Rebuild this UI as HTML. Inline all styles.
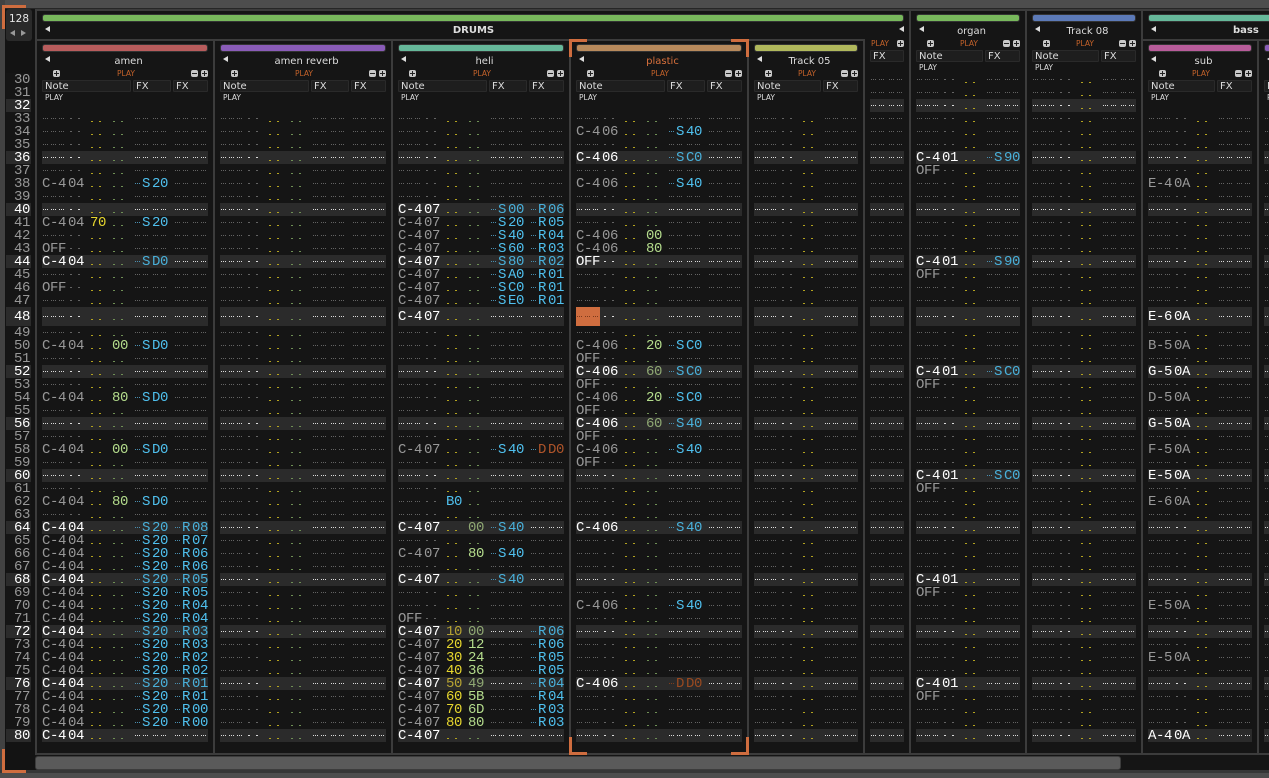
<!DOCTYPE html>
<html><head><meta charset="utf-8"><title>Pattern Editor</title>
<style>
:root{
--d:linear-gradient(90deg,#dcdcdc 1px,#0000 1px 2px,#dcdcdc 2px 3px,#0000 3px 4px,#dcdcdc 4px 5px,#0000 5px);
--l:linear-gradient(#dcdcdc,#dcdcdc);
--q:linear-gradient(90deg,#4a8fb0 1px,#0000 1px 2px,#4a8fb0 2px 3px,#0000 3px 4px,#4a8fb0 4px 5px,#0000 5px);
--z:linear-gradient(90deg,#7d3d1c 1px,#0000 1px 2px,#7d3d1c 2px 3px,#0000 3px 4px,#7d3d1c 4px 5px,#0000 5px);
--k:linear-gradient(90deg,#7b3a1c 1px,#0000 1px 2px,#7b3a1c 2px 3px,#0000 3px 4px,#7b3a1c 4px 5px,#0000 5px);
--y:linear-gradient(#b3a31f,#b3a31f);
--g:linear-gradient(#6f8f55,#6f8f55);
}
html,body{margin:0;padding:0;width:1269px;height:778px;overflow:hidden;background:#151515;font-family:"DejaVu Sans",sans-serif;position:relative}
#w{position:absolute;left:0;top:0;width:1269px;height:778px;overflow:hidden}
.t{position:absolute;top:0;height:778px;font:14px/14px "Liberation Mono",monospace;letter-spacing:-.4px}
.w1{width:166px}.w2{width:104px}.w3{width:34px}
.t i{position:absolute;left:0;right:0;display:block}
.s1{top:73px;height:234px;background:repeating-linear-gradient(#0000 0 26px,#2b2b2b 26px 39px,#0000 39px 52px)}
.s2{top:326px;height:416px;background:repeating-linear-gradient(#0000 0 39px,#2b2b2b 39px 52px)}
.s3{top:307px;height:19px;background:#2b2b2b}
.t i::before,.t i::after{content:"";position:absolute;left:0;right:0;top:0;bottom:0}
.s1::before{-webkit-mask-image:repeating-linear-gradient(#0000 0 6px,rgba(0,0,0,.4) 6px 7px,#0000 7px 19px,rgba(0,0,0,.4) 19px 20px,#0000 20px 32px,#000 32px 33px,#0000 33px 45px,rgba(0,0,0,.4) 45px 46px,#0000 46px 52px);mask-image:repeating-linear-gradient(#0000 0 6px,rgba(0,0,0,.4) 6px 7px,#0000 7px 19px,rgba(0,0,0,.4) 19px 20px,#0000 20px 32px,#000 32px 33px,#0000 33px 45px,rgba(0,0,0,.4) 45px 46px,#0000 46px 52px)}
.s2::before{-webkit-mask-image:repeating-linear-gradient(#0000 0 6px,rgba(0,0,0,.4) 6px 7px,#0000 7px 19px,rgba(0,0,0,.4) 19px 20px,#0000 20px 32px,rgba(0,0,0,.4) 32px 33px,#0000 33px 45px,#000 45px 46px,#0000 46px 52px);mask-image:repeating-linear-gradient(#0000 0 6px,rgba(0,0,0,.4) 6px 7px,#0000 7px 19px,rgba(0,0,0,.4) 19px 20px,#0000 20px 32px,rgba(0,0,0,.4) 32px 33px,#0000 33px 45px,#000 45px 46px,#0000 46px 52px)}
.s3::before{-webkit-mask-image:linear-gradient(#0000 0 9px,#000 9px 10px,#0000 10px);mask-image:linear-gradient(#0000 0 9px,#000 9px 10px,#0000 10px)}
.s1::after,.s2::after{-webkit-mask-image:repeating-linear-gradient(#0000 0 9px,#000 9px 10px,#0000 10px 13px);mask-image:repeating-linear-gradient(#0000 0 9px,#000 9px 10px,#0000 10px 13px)}
.s3::after{-webkit-mask-image:linear-gradient(#0000 0 12px,#000 12px 13px,#0000 13px);mask-image:linear-gradient(#0000 0 12px,#000 12px 13px,#0000 13px)}
.w1 i::before{background:var(--d) 1px 0/6px 100% no-repeat,var(--d) 9px 0/6px 100% no-repeat,var(--d) 17px 0/6px 100% no-repeat,var(--l) 28px 0/2px 100% no-repeat,var(--l) 36px 0/2px 100% no-repeat,var(--d) 93px 0/6px 100% no-repeat,var(--d) 101px 0/6px 100% no-repeat,var(--d) 111px 0/6px 100% no-repeat,var(--d) 119px 0/6px 100% no-repeat,var(--d) 133px 0/6px 100% no-repeat,var(--d) 141px 0/6px 100% no-repeat,var(--d) 151px 0/6px 100% no-repeat,var(--d) 159px 0/6px 100% no-repeat}
.w1 i::after{background:var(--y) 49px 0/2px 100% no-repeat,var(--y) 57px 0/2px 100% no-repeat,var(--g) 71px 0/2px 100% no-repeat,var(--g) 79px 0/2px 100% no-repeat}
.w2 i::before{background:var(--d) 1px 0/6px 100% no-repeat,var(--d) 9px 0/6px 100% no-repeat,var(--d) 17px 0/6px 100% no-repeat,var(--l) 28px 0/2px 100% no-repeat,var(--l) 36px 0/2px 100% no-repeat,var(--d) 71px 0/6px 100% no-repeat,var(--d) 79px 0/6px 100% no-repeat,var(--d) 89px 0/6px 100% no-repeat,var(--d) 97px 0/6px 100% no-repeat}
.w2 i::after{background:var(--y) 49px 0/2px 100% no-repeat,var(--y) 57px 0/2px 100% no-repeat}
.w3 i::before{background:var(--d) 1px 0/6px 100% no-repeat,var(--d) 9px 0/6px 100% no-repeat,var(--d) 19px 0/6px 100% no-repeat,var(--d) 27px 0/6px 100% no-repeat}
p{position:absolute;left:0;margin:0;color:#989898}
p b{position:absolute;left:0;top:0;width:26px;height:13px;font-weight:normal;background:#151515;white-space:nowrap;overflow:hidden}
p.b{color:#fff}
p.b b{background:#2b2b2b}
p.h b{height:19px;line-height:20px}
b.i{left:26px;width:20px}
b.v{left:48px;width:20px;color:#e6d62e}
b.m{left:70px;width:20px;color:#b4dc8c}
b.f{left:92px;width:32px;padding-left:8px;color:#4fc0ee}
b.g{left:132px;width:26px;padding-left:8px;color:#4fc0ee}
.w2 b.f{left:70px;width:26px}
p.b b.v{color:#b7a332}
p.b b.m{color:#8fa873}
p.b b.f,p.b b.g{color:#49b0da}
b.f::before,b.g::before{content:"";position:absolute;left:1px;top:6px;width:6px;height:1px;background:var(--q)}
p.h b.f::before,p.h b.g::before{top:9px}
b.f.r,p.b b.f.r{color:#9a4a20}
b.f.r::before{background:var(--z)}
u{display:inline-block;width:10px;text-decoration:none}
p b.cur,p.b b.cur{width:24px;height:19px;background:var(--k) 1px 9px/6px 1px no-repeat,var(--k) 9px 9px/6px 1px no-repeat,var(--k) 17px 9px/6px 1px no-repeat,#cf6d3f}
.h0{position:absolute;left:0;right:0;background:#151515;box-shadow:-6px 0 #151515,6px 0 #151515;font-family:"DejaVu Sans",sans-serif;letter-spacing:0;color:#ddd}
.n1{top:41px;height:71px}.n0{top:11px;height:62px}
.bar{position:absolute;left:0;right:0;top:3px;height:8px;border:1px solid #333;border-radius:3px;box-sizing:border-box}
.tri{position:absolute;left:3px;top:15px;width:0;height:0;border-top:3.5px solid transparent;border-bottom:3.5px solid transparent;border-right:5px solid #ddd}
.nm{position:absolute;left:7px;right:0;top:14px;text-align:center;font-size:10px;line-height:14px;color:#ddd;white-space:nowrap}
.pl,.pw{position:absolute;font-size:7.5px;line-height:8px;white-space:nowrap}
.pl{top:29px;color:#c4622a;text-align:center;width:40px}
.pw{top:53px;left:3px;color:#ddd}
.bt{position:absolute;top:29px;width:7px;height:7px;border-radius:2px;background:linear-gradient(#222,#222) center/5px 1px no-repeat,linear-gradient(#222,#222) center/1px 5px no-repeat,#c8c8c8}
.bt.x{background:linear-gradient(#222,#222) center/5px 1px no-repeat,#c8c8c8}
.bx{position:absolute;top:39px;height:12px;box-sizing:border-box;background:#1e1e1e;border:1px solid #2a2a2a;border-radius:1px;font-size:10px;line-height:11px;color:#ddd;padding-left:2px;overflow:hidden}
.L{position:absolute;background:#3c3c3c;width:2px;z-index:5}
.H{position:absolute;background:#3c3c3c;height:2px;z-index:5}
.o{position:absolute;background:#cf6d3f;z-index:8}
#rn{position:absolute;left:6px;top:73px;width:24px;font:14px/14px "Liberation Mono",monospace;letter-spacing:-.4px;color:#989898;text-align:right}
#rn div{height:13px;background:#151515;padding-right:1px;margin-right:-1px}
#rn .b{background:#2b2b2b;color:#fff}
#rn .h{height:19px;line-height:20px}
</style></head><body><div id="w">

<!-- top strip and left column -->
<div style="position:absolute;left:0;top:0;width:1269px;height:8px;background:#4d4d4d"></div>
<div style="position:absolute;left:0;top:8px;width:1269px;height:1px;background:#262626"></div>
<div style="position:absolute;left:0;top:0;width:5px;height:778px;background:#424242"></div>
<div style="position:absolute;left:5px;top:9px;width:30px;height:762px;background:#131313"></div>
<div style="position:absolute;left:6px;top:9px;width:26px;height:32px;background:#2a2a2a;border-radius:3px"></div>
<div style="position:absolute;left:6px;top:13px;width:26px;text-align:center;font-size:10.5px;line-height:12px;color:#e6e6e6">128</div>
<div style="position:absolute;left:10px;top:30px;width:0;height:0;border-top:3.5px solid transparent;border-bottom:3.5px solid transparent;border-right:5px solid #9a9a9a"></div>
<div style="position:absolute;left:21px;top:30px;width:0;height:0;border-top:3.5px solid transparent;border-bottom:3.5px solid transparent;border-left:5px solid #9a9a9a"></div>

<div id="rn"><div>30</div><div>31</div><div class="b">32</div><div>33</div><div>34</div><div>35</div><div class="b">36</div><div>37</div><div>38</div><div>39</div><div class="b">40</div><div>41</div><div>42</div><div>43</div><div class="b">44</div><div>45</div><div>46</div><div>47</div><div class="b h">48</div><div>49</div><div>50</div><div>51</div><div class="b">52</div><div>53</div><div>54</div><div>55</div><div class="b">56</div><div>57</div><div>58</div><div>59</div><div class="b">60</div><div>61</div><div>62</div><div>63</div><div class="b">64</div><div>65</div><div>66</div><div>67</div><div class="b">68</div><div>69</div><div>70</div><div>71</div><div class="b">72</div><div>73</div><div>74</div><div>75</div><div class="b">76</div><div>77</div><div>78</div><div>79</div><div class="b">80</div></div>

<!-- amen -->
<div class="t w1" style="left:42px"><i class="s1"></i><i class="s3"></i><i class="s2"></i>
<p style="top:177px"><b>C-4</b><b class="i">04</b><b class="f"><u>S</u>20</b></p>
<p style="top:216px"><b>C-4</b><b class="i">04</b><b class="v">70</b><b class="f"><u>S</u>20</b></p>
<p style="top:242px"><b>OFF</b></p>
<p class="b" style="top:255px"><b>C-4</b><b class="i">04</b><b class="f"><u>S</u>D0</b></p>
<p style="top:281px"><b>OFF</b></p>
<p style="top:339px"><b>C-4</b><b class="i">04</b><b class="m">00</b><b class="f"><u>S</u>D0</b></p>
<p style="top:391px"><b>C-4</b><b class="i">04</b><b class="m">80</b><b class="f"><u>S</u>D0</b></p>
<p style="top:443px"><b>C-4</b><b class="i">04</b><b class="m">00</b><b class="f"><u>S</u>D0</b></p>
<p style="top:495px"><b>C-4</b><b class="i">04</b><b class="m">80</b><b class="f"><u>S</u>D0</b></p>
<p class="b" style="top:521px"><b>C-4</b><b class="i">04</b><b class="f"><u>S</u>20</b><b class="g"><u>R</u>08</b></p>
<p style="top:534px"><b>C-4</b><b class="i">04</b><b class="f"><u>S</u>20</b><b class="g"><u>R</u>07</b></p>
<p style="top:547px"><b>C-4</b><b class="i">04</b><b class="f"><u>S</u>20</b><b class="g"><u>R</u>06</b></p>
<p style="top:560px"><b>C-4</b><b class="i">04</b><b class="f"><u>S</u>20</b><b class="g"><u>R</u>06</b></p>
<p class="b" style="top:573px"><b>C-4</b><b class="i">04</b><b class="f"><u>S</u>20</b><b class="g"><u>R</u>05</b></p>
<p style="top:586px"><b>C-4</b><b class="i">04</b><b class="f"><u>S</u>20</b><b class="g"><u>R</u>05</b></p>
<p style="top:599px"><b>C-4</b><b class="i">04</b><b class="f"><u>S</u>20</b><b class="g"><u>R</u>04</b></p>
<p style="top:612px"><b>C-4</b><b class="i">04</b><b class="f"><u>S</u>20</b><b class="g"><u>R</u>04</b></p>
<p class="b" style="top:625px"><b>C-4</b><b class="i">04</b><b class="f"><u>S</u>20</b><b class="g"><u>R</u>03</b></p>
<p style="top:638px"><b>C-4</b><b class="i">04</b><b class="f"><u>S</u>20</b><b class="g"><u>R</u>03</b></p>
<p style="top:651px"><b>C-4</b><b class="i">04</b><b class="f"><u>S</u>20</b><b class="g"><u>R</u>02</b></p>
<p style="top:664px"><b>C-4</b><b class="i">04</b><b class="f"><u>S</u>20</b><b class="g"><u>R</u>02</b></p>
<p class="b" style="top:677px"><b>C-4</b><b class="i">04</b><b class="f"><u>S</u>20</b><b class="g"><u>R</u>01</b></p>
<p style="top:690px"><b>C-4</b><b class="i">04</b><b class="f"><u>S</u>20</b><b class="g"><u>R</u>01</b></p>
<p style="top:703px"><b>C-4</b><b class="i">04</b><b class="f"><u>S</u>20</b><b class="g"><u>R</u>00</b></p>
<p style="top:716px"><b>C-4</b><b class="i">04</b><b class="f"><u>S</u>20</b><b class="g"><u>R</u>00</b></p>
<p class="b" style="top:729px"><b>C-4</b><b class="i">04</b></p>
<div class="h0 n1"><div class="bar" style="background:#b85c5c"></div><div class="tri"></div><div class="nm">amen</div><div class="bt" style="left:11px"></div><div class="pl" style="left:64px">PLAY</div><div class="bt x" style="left:149px"></div><div class="bt" style="left:159px"></div><div class="bx" style="left:0;width:89px">Note</div><div class="bx" style="left:91px;width:38px">FX</div><div class="bx" style="left:131px;width:35px">FX</div><div class="pw">PLAY</div></div>
</div>

<!-- amen reverb -->
<div class="t w1" style="left:220px"><i class="s1"></i><i class="s3"></i><i class="s2"></i>
<div class="h0 n1"><div class="bar" style="background:#8a5cb8"></div><div class="tri"></div><div class="nm">amen reverb</div><div class="bt" style="left:11px"></div><div class="pl" style="left:64px">PLAY</div><div class="bt x" style="left:149px"></div><div class="bt" style="left:159px"></div><div class="bx" style="left:0;width:89px">Note</div><div class="bx" style="left:91px;width:38px">FX</div><div class="bx" style="left:131px;width:35px">FX</div><div class="pw">PLAY</div></div>
</div>

<!-- heli -->
<div class="t w1" style="left:398px"><i class="s1"></i><i class="s3"></i><i class="s2"></i>
<p class="b" style="top:203px"><b>C-4</b><b class="i">07</b><b class="f"><u>S</u>00</b><b class="g"><u>R</u>06</b></p>
<p style="top:216px"><b>C-4</b><b class="i">07</b><b class="f"><u>S</u>20</b><b class="g"><u>R</u>05</b></p>
<p style="top:229px"><b>C-4</b><b class="i">07</b><b class="f"><u>S</u>40</b><b class="g"><u>R</u>04</b></p>
<p style="top:242px"><b>C-4</b><b class="i">07</b><b class="f"><u>S</u>60</b><b class="g"><u>R</u>03</b></p>
<p class="b" style="top:255px"><b>C-4</b><b class="i">07</b><b class="f"><u>S</u>80</b><b class="g"><u>R</u>02</b></p>
<p style="top:268px"><b>C-4</b><b class="i">07</b><b class="f"><u>S</u>A0</b><b class="g"><u>R</u>01</b></p>
<p style="top:281px"><b>C-4</b><b class="i">07</b><b class="f"><u>S</u>C0</b><b class="g"><u>R</u>01</b></p>
<p style="top:294px"><b>C-4</b><b class="i">07</b><b class="f"><u>S</u>E0</b><b class="g"><u>R</u>01</b></p>
<p class="b h" style="top:307px"><b>C-4</b><b class="i">07</b></p>
<p style="top:443px"><b>C-4</b><b class="i">07</b><b class="f"><u>S</u>40</b><b class="g" style="color:#b0552a"><u>D</u>D0</b></p>
<p style="top:495px"><b class="v" style="color:#4fc0ee">B0</b></p>
<p class="b" style="top:521px"><b>C-4</b><b class="i">07</b><b class="m">00</b><b class="f"><u>S</u>40</b></p>
<p style="top:547px"><b>C-4</b><b class="i">07</b><b class="m">80</b><b class="f"><u>S</u>40</b></p>
<p class="b" style="top:573px"><b>C-4</b><b class="i">07</b><b class="f"><u>S</u>40</b></p>
<p style="top:612px"><b>OFF</b></p>
<p class="b" style="top:625px"><b>C-4</b><b class="i">07</b><b class="v">10</b><b class="m">00</b><b class="g"><u>R</u>06</b></p>
<p style="top:638px"><b>C-4</b><b class="i">07</b><b class="v">20</b><b class="m">12</b><b class="g"><u>R</u>06</b></p>
<p style="top:651px"><b>C-4</b><b class="i">07</b><b class="v">30</b><b class="m">24</b><b class="g"><u>R</u>05</b></p>
<p style="top:664px"><b>C-4</b><b class="i">07</b><b class="v">40</b><b class="m">36</b><b class="g"><u>R</u>05</b></p>
<p class="b" style="top:677px"><b>C-4</b><b class="i">07</b><b class="v">50</b><b class="m">49</b><b class="g"><u>R</u>04</b></p>
<p style="top:690px"><b>C-4</b><b class="i">07</b><b class="v">60</b><b class="m">5B</b><b class="g"><u>R</u>04</b></p>
<p style="top:703px"><b>C-4</b><b class="i">07</b><b class="v">70</b><b class="m">6D</b><b class="g"><u>R</u>03</b></p>
<p style="top:716px"><b>C-4</b><b class="i">07</b><b class="v">80</b><b class="m">80</b><b class="g"><u>R</u>03</b></p>
<p class="b" style="top:729px"><b>C-4</b><b class="i">07</b></p>
<div class="h0 n1"><div class="bar" style="background:#66b89a"></div><div class="tri"></div><div class="nm">heli</div><div class="bt" style="left:11px"></div><div class="pl" style="left:64px">PLAY</div><div class="bt x" style="left:149px"></div><div class="bt" style="left:159px"></div><div class="bx" style="left:0;width:89px">Note</div><div class="bx" style="left:91px;width:38px">FX</div><div class="bx" style="left:131px;width:35px">FX</div><div class="pw">PLAY</div></div>
</div>

<!-- plastic -->
<div class="t w1" style="left:576px"><i class="s1"></i><i class="s3"></i><i class="s2"></i>
<p style="top:125px"><b>C-4</b><b class="i">06</b><b class="f"><u>S</u>40</b></p>
<p class="b" style="top:151px"><b>C-4</b><b class="i">06</b><b class="f"><u>S</u>C0</b></p>
<p style="top:177px"><b>C-4</b><b class="i">06</b><b class="f"><u>S</u>40</b></p>
<p style="top:229px"><b>C-4</b><b class="i">06</b><b class="m">00</b></p>
<p style="top:242px"><b>C-4</b><b class="i">06</b><b class="m">80</b></p>
<p class="b" style="top:255px"><b>OFF</b></p>
<p class="b h" style="top:307px"><b class="cur"></b></p>
<p style="top:339px"><b>C-4</b><b class="i">06</b><b class="m">20</b><b class="f"><u>S</u>C0</b></p>
<p style="top:352px"><b>OFF</b></p>
<p class="b" style="top:365px"><b>C-4</b><b class="i">06</b><b class="m">60</b><b class="f"><u>S</u>C0</b></p>
<p style="top:378px"><b>OFF</b></p>
<p style="top:391px"><b>C-4</b><b class="i">06</b><b class="m">20</b><b class="f"><u>S</u>C0</b></p>
<p style="top:404px"><b>OFF</b></p>
<p class="b" style="top:417px"><b>C-4</b><b class="i">06</b><b class="m">60</b><b class="f"><u>S</u>40</b></p>
<p style="top:430px"><b>OFF</b></p>
<p style="top:443px"><b>C-4</b><b class="i">06</b><b class="f"><u>S</u>40</b></p>
<p style="top:456px"><b>OFF</b></p>
<p class="b" style="top:521px"><b>C-4</b><b class="i">06</b><b class="f"><u>S</u>40</b></p>
<p style="top:599px"><b>C-4</b><b class="i">06</b><b class="f"><u>S</u>40</b></p>
<p class="b" style="top:677px"><b>C-4</b><b class="i">06</b><b class="f r"><u>D</u>D0</b></p>
<div class="h0 n1"><div class="bar" style="background:#b88a5c"></div><div class="tri"></div><div class="nm" style="color:#d8703c">plastic</div><div class="bt" style="left:11px"></div><div class="pl" style="left:64px">PLAY</div><div class="bt x" style="left:149px"></div><div class="bt" style="left:159px"></div><div class="bx" style="left:0;width:89px">Note</div><div class="bx" style="left:91px;width:38px">FX</div><div class="bx" style="left:131px;width:35px">FX</div><div class="pw">PLAY</div></div>
</div>

<!-- Track 05 -->
<div class="t w2" style="left:754px"><i class="s1"></i><i class="s3"></i><i class="s2"></i>
<div class="h0 n1"><div class="bar" style="background:#b0b85c"></div><div class="tri"></div><div class="nm">Track 05</div><div class="bt" style="left:11px"></div><div class="pl" style="left:33px">PLAY</div><div class="bt x" style="left:87px"></div><div class="bt" style="left:97px"></div><div class="bx" style="left:0;width:67px">Note</div><div class="bx" style="left:69px;width:35px">FX</div><div class="pw">PLAY</div></div>
</div>

<!-- group fx -->
<div class="t w3" style="left:870px"><i class="s1"></i><i class="s3"></i><i class="s2"></i>
<div class="h0 n0" style="box-shadow:none"><div class="pl" style="left:-10px">PLAY</div><div class="bt" style="left:27px"></div><div class="bx" style="left:0;width:34px">FX</div></div>
</div>

<!-- organ -->
<div class="t w2" style="left:916px"><i class="s1"></i><i class="s3"></i><i class="s2"></i>
<p class="b" style="top:151px"><b>C-4</b><b class="i">01</b><b class="f"><u>S</u>90</b></p>
<p style="top:164px"><b>OFF</b></p>
<p class="b" style="top:255px"><b>C-4</b><b class="i">01</b><b class="f"><u>S</u>90</b></p>
<p style="top:268px"><b>OFF</b></p>
<p class="b" style="top:365px"><b>C-4</b><b class="i">01</b><b class="f"><u>S</u>C0</b></p>
<p style="top:378px"><b>OFF</b></p>
<p class="b" style="top:469px"><b>C-4</b><b class="i">01</b><b class="f"><u>S</u>C0</b></p>
<p style="top:482px"><b>OFF</b></p>
<p class="b" style="top:573px"><b>C-4</b><b class="i">01</b></p>
<p style="top:586px"><b>OFF</b></p>
<p class="b" style="top:677px"><b>C-4</b><b class="i">01</b></p>
<p style="top:690px"><b>OFF</b></p>
<div class="h0 n0"><div class="bar" style="background:#78b85c"></div><div class="tri"></div><div class="nm">organ</div><div class="bt" style="left:11px"></div><div class="pl" style="left:33px">PLAY</div><div class="bt x" style="left:87px"></div><div class="bt" style="left:97px"></div><div class="bx" style="left:0;width:67px">Note</div><div class="bx" style="left:69px;width:35px">FX</div><div class="pw">PLAY</div></div>
</div>

<!-- Track 08 -->
<div class="t w2" style="left:1032px"><i class="s1"></i><i class="s3"></i><i class="s2"></i>
<div class="h0 n0"><div class="bar" style="background:#5c7ab8"></div><div class="tri"></div><div class="nm">Track 08</div><div class="bt" style="left:11px"></div><div class="pl" style="left:33px">PLAY</div><div class="bt x" style="left:87px"></div><div class="bt" style="left:97px"></div><div class="bx" style="left:0;width:67px">Note</div><div class="bx" style="left:69px;width:35px">FX</div><div class="pw">PLAY</div></div>
</div>

<!-- sub -->
<div class="t w2" style="left:1148px"><i class="s1"></i><i class="s3"></i><i class="s2"></i>
<p style="top:177px"><b>E-4</b><b class="i">0A</b></p>
<p class="b h" style="top:307px"><b>E-6</b><b class="i">0A</b></p>
<p style="top:339px"><b>B-5</b><b class="i">0A</b></p>
<p class="b" style="top:365px"><b>G-5</b><b class="i">0A</b></p>
<p style="top:391px"><b>D-5</b><b class="i">0A</b></p>
<p class="b" style="top:417px"><b>G-5</b><b class="i">0A</b></p>
<p style="top:443px"><b>F-5</b><b class="i">0A</b></p>
<p class="b" style="top:469px"><b>E-5</b><b class="i">0A</b></p>
<p style="top:495px"><b>E-6</b><b class="i">0A</b></p>
<p style="top:599px"><b>E-5</b><b class="i">0A</b></p>
<p style="top:651px"><b>E-5</b><b class="i">0A</b></p>
<p class="b" style="top:729px"><b>A-4</b><b class="i">0A</b></p>
<div class="h0 n1"><div class="bar" style="background:#b85c9a"></div><div class="tri"></div><div class="nm">sub</div><div class="bt" style="left:11px"></div><div class="pl" style="left:33px">PLAY</div><div class="bt x" style="left:87px"></div><div class="bt" style="left:97px"></div><div class="bx" style="left:0;width:67px">Note</div><div class="bx" style="left:69px;width:35px">FX</div><div class="pw">PLAY</div></div>
</div>

<!-- next track, clipped -->
<div class="t w2" style="left:1264px"><i class="s1"></i><i class="s3"></i><i class="s2"></i>
<div class="h0 n1"><div class="bar" style="background:#8a5cb8"></div><div class="tri"></div><div class="bx" style="left:0;width:67px">N</div><div class="pw">P</div></div>
</div>

<!-- group headers -->
<div style="position:absolute;left:37px;top:11px;width:872px;height:28px;background:#151515"></div>
<div class="bar" style="left:42px;right:auto;width:862px;top:14px;background:#78b85c"></div>
<div style="position:absolute;left:45px;top:26px;width:0;height:0;border-top:3.5px solid transparent;border-bottom:3.5px solid transparent;border-right:5px solid #ddd"></div>
<div style="position:absolute;left:899px;top:26px;width:0;height:0;border-top:3.5px solid transparent;border-bottom:3.5px solid transparent;border-right:5px solid #ddd"></div>
<div style="position:absolute;left:400px;width:147px;top:24px;text-align:center;font-size:10px;font-weight:bold;line-height:14px;color:#ddd">DRUMS</div>

<div style="position:absolute;left:1143px;top:11px;width:126px;height:28px;background:#151515"></div>
<div class="bar" style="left:1148px;right:auto;width:125px;top:14px;background:#66b89a"></div>
<div style="position:absolute;left:1151px;top:26px;width:0;height:0;border-top:3.5px solid transparent;border-bottom:3.5px solid transparent;border-right:5px solid #ddd"></div>
<div style="position:absolute;left:1233px;top:24px;font-size:10px;font-weight:bold;line-height:14px;color:#ddd">bass</div>

<!-- structural lines -->
<div class="H" style="left:35px;top:9px;width:1234px"></div>
<div class="L" style="left:35px;top:9px;height:746px"></div>
<div class="L" style="left:909px;top:9px;height:746px"></div>
<div class="L" style="left:1025px;top:9px;height:746px"></div>
<div class="L" style="left:1141px;top:9px;height:746px"></div>
<div class="H" style="left:35px;top:39px;width:829px"></div>
<div class="H" style="left:1141px;top:39px;width:128px"></div>
<div class="L" style="left:213px;top:39px;height:716px"></div>
<div class="L" style="left:391px;top:39px;height:716px"></div>
<div class="L" style="left:569px;top:39px;height:716px"></div>
<div class="L" style="left:747px;top:39px;height:716px"></div>
<div class="L" style="left:863px;top:39px;height:716px"></div>
<div class="L" style="left:1257px;top:39px;height:716px"></div>
<div class="H" style="left:35px;top:753px;width:1234px"></div>

<!-- bottom area -->
<div style="position:absolute;left:35px;top:755px;width:1234px;height:15px;background:#151515"></div>
<div style="position:absolute;left:36px;top:757px;width:1084px;height:12px;background:#5a5a5a;border-radius:2px;box-shadow:0 0 0 1px #3c3c3c"></div>
<div style="position:absolute;left:0;top:770px;width:1269px;height:3px;background:#363636"></div>
<div style="position:absolute;left:0;top:773px;width:1269px;height:5px;background:#4d4d4d"></div>

<!-- orange selections -->
<div class="o" style="left:2px;top:5px;width:24px;height:3px"></div>
<div class="o" style="left:2px;top:5px;width:3px;height:24px"></div>
<div class="o" style="left:2px;top:749px;width:3px;height:24px"></div>
<div class="o" style="left:2px;top:770px;width:24px;height:3px"></div>
<div class="o" style="left:569px;top:39px;width:18px;height:3px"></div>
<div class="o" style="left:569px;top:39px;width:3px;height:18px"></div>
<div class="o" style="left:731px;top:39px;width:18px;height:3px"></div>
<div class="o" style="left:746px;top:39px;width:3px;height:18px"></div>
<div class="o" style="left:569px;top:737px;width:3px;height:18px"></div>
<div class="o" style="left:569px;top:752px;width:18px;height:3px"></div>
<div class="o" style="left:746px;top:737px;width:3px;height:18px"></div>
<div class="o" style="left:731px;top:752px;width:18px;height:3px"></div>
</div></body></html>
